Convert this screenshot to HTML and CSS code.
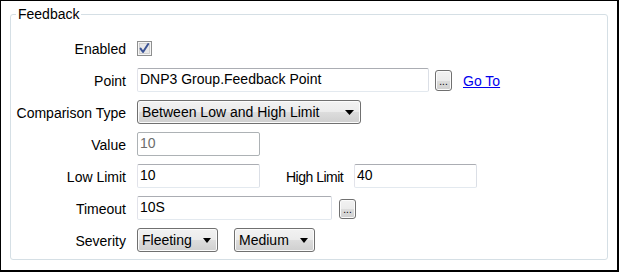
FILE: index.html
```html
<!DOCTYPE html>
<html>
<head>
<meta charset="utf-8">
<link rel="stylesheet" href="styles.css">
</head>
<body>
<div class="frame">
  <fieldset class="group">
    <legend class="legend">Feedback</legend>
    <div class="row">
      <label class="lbl">Enabled</label>
      <span class="check">
        <svg width="15" height="15" viewBox="0 0 15 15">
          <rect x="0.5" y="0.5" width="14" height="14" fill="#f4f4f4" stroke="#8e8f8f"/>
          <rect x="1.5" y="1.5" width="12" height="12" fill="#dedede" stroke="#f6f6f6"/>
          <rect x="2.5" y="2.5" width="10" height="10" fill="#e8e8e8" stroke="#c4c4c4" stroke-width="0.6"/>
          <path d="M3.6 7.6 L6 11 L11.2 3" fill="none" stroke="#3b5394" stroke-width="2" stroke-linejoin="round" stroke-linecap="round"/>
        </svg>
      </span>
    </div>
    <div class="row">
      <label class="lbl">Point</label>
      <input class="txt w-point" type="text" value="DNP3 Group.Feedback Point">
      <span class="dots">...</span>
      <a class="goto" href="#">Go To</a>
    </div>
    <div class="row">
      <label class="lbl">Comparison Type</label>
      <div class="combo w-cmp"><span>Between Low and High Limit</span><svg class="arr" width="9" height="5" viewBox="0 0 9 5"><path d="M0 0H9L4.5 5Z" fill="#000"/></svg></div>
    </div>
    <div class="row">
      <label class="lbl">Value</label>
      <input class="txt w-short dis" type="text" value="10" disabled>
    </div>
    <div class="row">
      <label class="lbl">Low Limit</label>
      <input class="txt w-short" type="text" value="10">
      <label class="lbl2">High Limit</label>
      <input class="txt w-short" type="text" value="40">
    </div>
    <div class="row">
      <label class="lbl">Timeout</label>
      <input class="txt w-time" type="text" value="10S">
      <span class="dots dots2">...</span>
    </div>
    <div class="row">
      <label class="lbl">Severity</label>
      <div class="combo w-sev"><span>Fleeting</span><svg class="arr" width="8" height="5" viewBox="0 0 8 5"><path d="M0 0H8L4 5Z" fill="#000"/></svg></div>
      <div class="combo w-sev sev2"><span>Medium</span><svg class="arr" width="8" height="5" viewBox="0 0 8 5"><path d="M0 0H8L4 5Z" fill="#000"/></svg></div>
    </div>
  </fieldset>
</div>
</body>
</html>
```

FILE: styles.css
```css
html, body {
  margin: 0;
  padding: 0;
  background: #fff;
}
body {
  font-family: "Liberation Sans", Arial, sans-serif;
  font-size: 14px;
  color: #000;
}
.frame {
  width: 619px;
  height: 272px;
  box-sizing: border-box;
  border: 1px solid #000;
  border-right-width: 2px;
  border-bottom-width: 2px;
  padding-top: 5px;
  overflow: hidden;
}
.group {
  margin: 0 9px;
  border: 1px solid #d5dfe5;
  border-radius: 3px;
  padding: 14px 0 7px 5px;
  display: flex;
  flex-direction: column;
  gap: 8px;
  min-width: 0;
}
.legend {
  padding: 0 2px;
  line-height: 16px;
  font-size: 14px;
}
.row {
  display: flex;
  align-items: center;
  height: 24px;
}
.lbl {
  width: 110px;
  text-align: right;
  margin-right: 11px;
  flex: none;
  padding-top: 2px;
}
.lbl2 {
  width: 57px;
  white-space: nowrap;
  letter-spacing: -0.5px;
  margin-left: 26px;
  margin-right: 11px;
  padding-top: 2px;
}
.check {
  display: flex;
  width: 15px;
  height: 15px;
  margin-top: 1px;
}
.txt {
  box-sizing: border-box;
  height: 24px;
  margin: 0;
  border: 1px solid;
  border-color: #abadb3 #dbdfe6 #e3e9ef #e2e3ea;
  border-radius: 2px;
  padding: 0 2px 2px;
  font-family: "Liberation Sans", Arial, sans-serif;
  font-size: 14px;
  color: #000;
  background: #fff;
  outline: none;
}
.txt.dis {
  color: #6d6d6d;
  border-color: #adb2b5;
}
.w-point { width: 292px; }
.w-short { width: 123px; }
.w-time { width: 195px; }
.dots {
  box-sizing: border-box;
  width: 17px;
  height: 21px;
  margin-left: 6px;
  margin-top: 1px;
  border: 1px solid #707070;
  border-radius: 3px;
  background: linear-gradient(#f2f2f2 0%, #ebebeb 50%, #dddddd 50%, #cfcfcf 100%);
  box-shadow: inset 0 0 0 1px #fbfbfb;
  font-size: 10px;
  line-height: 10px;
  display: flex;
  align-items: flex-end;
  justify-content: center;
  padding-bottom: 3px;
  color: #000;
}
.dots2 {
  margin-left: 7px;
  height: 20px;
}
.goto {
  margin-left: 11px;
  color: #0000ee;
  text-decoration: underline;
  padding-top: 2px;
}
.combo {
  box-sizing: border-box;
  height: 24px;
  border: 1px solid #707070;
  border-radius: 3px;
  background: linear-gradient(#f2f2f2 0%, #ebebeb 50%, #dddddd 50%, #cfcfcf 100%);
  box-shadow: inset 0 0 0 1px #fbfbfb;
  display: flex;
  align-items: center;
  justify-content: space-between;
  padding: 0 6px 0 4px;
}
.combo span {
  padding-bottom: 1px;
}
.w-cmp { width: 224px; }
.w-sev { width: 81px; }
.sev2 { margin-left: 16px; }
.arr { flex: none; }
```
